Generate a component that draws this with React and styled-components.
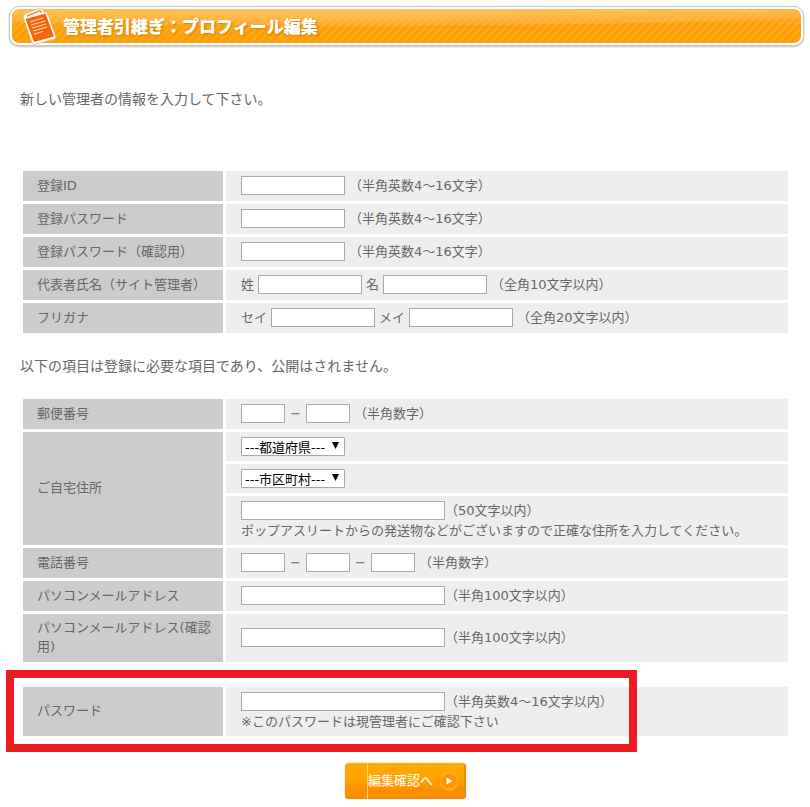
import React from 'react'
import styled, { createGlobalStyle } from 'styled-components'

const GlobalStyle = createGlobalStyle`
  body {
    margin: 0;
    background-color: white;
    color: #666;
    font-family: "DejaVu Sans", "Noto Sans CJK JP", sans-serif;
    font-size: 13px;
    line-height: 19px;
  }
`

const Page = styled.main`
  padding: 6px 6px 8px 9px;
`

const TitleFrame = styled.header`
  border: 1px solid #c8c8c8;
  border-radius: 10px;
  padding: 2px;
  background-color: white;
  box-shadow: 0 1px 2px #bbb;
`

const TitleBar = styled.div`
  position: relative;
  display: flex;
  align-items: center;
  height: 34px;
  padding-left: 51px;
  border-radius: 7px;
  background-color: #fd9f06;
  background-image:
    radial-gradient(ellipse 70% 17px at 42% 0, rgba(255, 255, 255, 0.28), rgba(255, 255, 255, 0.1) 96%, transparent 100%),
    linear-gradient(rgba(255, 255, 255, 0.15), transparent 60%),
    linear-gradient(135deg, transparent 44%, rgba(255, 255, 255, 0.2) 45% 55%, transparent 56%);
  background-size: 100% 100%, 100% 100%, 8px 8px;
`

const Title = styled.h1`
  margin: 0;
  color: white;
  font-family: "Noto Sans CJK JP", sans-serif;
  font-size: 17px;
  font-weight: 900;
  line-height: 24px;
  text-shadow: 1px 1px 2px #c98218;
`

const NoteIcon = styled.svg`
  position: absolute;
  left: 9px;
  top: -4px;
  width: 38px;
  height: 42px;
`

const Form = styled.form`
  padding: 0 13px 0 11px;
`

const Lead = styled.p`
  margin: 0;
  padding: ${props => props.$first ? '43px 0 59px' : '20px 0'};
  font-size: 14px;
  line-height: 20px;
`

const Table = styled.table`
  width: 100%;
  table-layout: fixed;
  border-spacing: 3px;
`

const HeadCell = styled.th`
  width: 178px;
  padding: 4px 8px 6px 14px;
  background-color: #ccc;
  font-weight: normal;
  text-align: left;
`

const Cell = styled.td`
  padding: 5px 15px;
  background-color: #eee;
`

const Line = styled.div`
  display: flex;
  align-items: flex-start;
  gap: ${props => props.$tight ? '0' : '4px'};
  min-height: 20px;
`

const TextBox = styled.input`
  box-sizing: border-box;
  width: ${props => props.$size === 'long' ? '204px' : props.$size === 'short' ? '44px' : '104px'};
  height: 19px;
  padding: 0 2px;
  border: 1px solid #a9a9a9;
  background-color: white;
  font: inherit;
`

const Dash = styled.span`
  width: 13px;
  text-align: center;
`

const SelectWrap = styled.div`
  position: relative;
  width: 104px;
  height: 19px;
`

const Select = styled.select`
  appearance: none;
  box-sizing: border-box;
  display: block;
  width: 100%;
  height: 19px;
  padding: 2px 16px 0 3px;
  border: 1px solid #a9a9a9;
  border-radius: 1px;
  background-color: white;
  color: black;
  font-family: inherit;
  font-size: 13px;
  line-height: 16px;
`

const Arrow = styled.svg`
  position: absolute;
  right: 6px;
  top: 5px;
  width: 7px;
  height: 7px;
  pointer-events: none;
`

const PasswordArea = styled.section`
  position: relative;
  margin-top: 19px;
`

const RedFrame = styled.div`
  position: absolute;
  box-sizing: border-box;
  left: -14px;
  top: -14px;
  bottom: -13px;
  width: 631px;
  border: 8px solid #ed1c24;
  pointer-events: none;
`

const Actions = styled.div`
  display: flex;
  justify-content: center;
  padding-top: 24px;
`

const SubmitButton = styled.button`
  display: flex;
  align-items: center;
  gap: 6px;
  height: 36px;
  padding: 0 7px 0 0;
  border: 0;
  border-radius: 4px;
  background: linear-gradient(#ffab00, #ffa200 50%, #ff8c00 75%, #ff9600);
  box-shadow: inset -2px -2px 1px #f08a10, 0 0 1px #d98a30;
  color: white;
  font-family: inherit;
  font-size: 13px;
`

const ButtonLabel = styled.span`
  display: flex;
  align-items: center;
  box-sizing: border-box;
  height: 36px;
  margin-left: 22px;
  padding-bottom: 3px;
  border-left: 1px solid #ffd27a;
`

const pref = ['---都道府県---']
const city = ['---市区町村---']

const Row = ({ label, id, rowSpan, children }) => (
    <tr>
        <HeadCell scope="row" rowSpan={rowSpan}><label htmlFor={id}>{label}</label></HeadCell>
        <Cell>{children}</Cell>
    </tr>
)

const DropDown = ({ id, name, options }) => (
    <SelectWrap>
        <Select id={id} aria-label={name}>
            {options.map(option => <option key={option}>{option}</option>)}
        </Select>
        <Arrow viewBox="0 0 7 7"><path d="M0 0h7L3.5 7z" fill="black" /></Arrow>
    </SelectWrap>
)

const App = () => {

    const handleSubmit = (e) => {
        e.preventDefault()
    }

    return (
        <Page>
            <GlobalStyle />
            <TitleFrame>
                <TitleBar>
                    <NoteIcon viewBox="0 0 38 42">
                        <path d="M2 12 L4 9 L19 3 L22 4 L23 7 L26 7 L35 32 L34 34 L13 39.5 L11 38 Z" fill="white" stroke="#d9b888" strokeWidth="0.8" strokeLinejoin="round" />
                        <path d="M4.5 14 L24.5 8.5 L33 31.5 L13 37 Z" fill="#f9650c" />
                        <path d="M6 11 L19 5.5 L20.5 7.5" fill="none" stroke="#f98a40" strokeWidth="1.5" />
                        <path d="M9 17l13-4M10 20l14-4M11 23l14-4M12 26l14-4M13 29l9-2.5" stroke="#ffd9b8" strokeWidth="1" />
                    </NoteIcon>
                    <Title>管理者引継ぎ：プロフィール編集</Title>
                </TitleBar>
            </TitleFrame>
            <Form onSubmit={handleSubmit}>
                <Lead $first>新しい管理者の情報を入力して下さい。</Lead>
                <Table>
                    <tbody>
                        <Row label="登録ID" id="loginId">
                            <Line><TextBox id="loginId" />（半角英数4～16文字）</Line>
                        </Row>
                        <Row label="登録パスワード" id="pass">
                            <Line><TextBox id="pass" type="password" />（半角英数4～16文字）</Line>
                        </Row>
                        <Row label="登録パスワード（確認用）" id="passConfirm">
                            <Line><TextBox id="passConfirm" type="password" />（半角英数4～16文字）</Line>
                        </Row>
                        <Row label="代表者氏名（サイト管理者）" id="lastName">
                            <Line>
                                <label htmlFor="lastName">姓</label>
                                <TextBox id="lastName" />
                                <label htmlFor="firstName">名</label>
                                <TextBox id="firstName" />
                                （全角10文字以内）
                            </Line>
                        </Row>
                        <Row label="フリガナ" id="lastKana">
                            <Line>
                                <label htmlFor="lastKana">セイ</label>
                                <TextBox id="lastKana" />
                                <label htmlFor="firstKana">メイ</label>
                                <TextBox id="firstKana" />
                                （全角20文字以内）
                            </Line>
                        </Row>
                    </tbody>
                </Table>
                <Lead>以下の項目は登録に必要な項目であり、公開はされません。</Lead>
                <Table>
                    <tbody>
                        <Row label="郵便番号" id="zip1">
                            <Line>
                                <TextBox id="zip1" $size="short" />
                                <Dash>−</Dash>
                                <TextBox aria-label="郵便番号" $size="short" />
                                （半角数字）
                            </Line>
                        </Row>
                        <Row label="ご自宅住所" id="pref" rowSpan={3}>
                            <DropDown id="pref" name="都道府県" options={pref} />
                        </Row>
                        <tr>
                            <Cell><DropDown id="city" name="市区町村" options={city} /></Cell>
                        </tr>
                        <tr>
                            <Cell>
                                <Line $tight><TextBox aria-label="ご自宅住所" $size="long" />（50文字以内）</Line>
                                ポップアスリートからの発送物などがございますので正確な住所を入力してください。
                            </Cell>
                        </tr>
                        <Row label="電話番号" id="tel1">
                            <Line>
                                <TextBox id="tel1" $size="short" />
                                <Dash>−</Dash>
                                <TextBox aria-label="電話番号" $size="short" />
                                <Dash>−</Dash>
                                <TextBox aria-label="電話番号" $size="short" />
                                （半角数字）
                            </Line>
                        </Row>
                        <Row label="パソコンメールアドレス" id="mail">
                            <Line $tight><TextBox id="mail" $size="long" />（半角100文字以内）</Line>
                        </Row>
                        <Row label="パソコンメールアドレス(確認用)" id="mailConfirm">
                            <Line $tight><TextBox id="mailConfirm" $size="long" />（半角100文字以内）</Line>
                        </Row>
                    </tbody>
                </Table>
                <PasswordArea>
                    <Table>
                        <tbody>
                            <Row label="パスワード" id="adminPass">
                                <Line $tight><TextBox id="adminPass" type="password" $size="long" />（半角英数4～16文字以内）</Line>
                                ※このパスワードは現管理者にご確認下さい
                            </Row>
                        </tbody>
                    </Table>
                    <RedFrame />
                </PasswordArea>
                <Actions>
                    <SubmitButton type="submit">
                        <ButtonLabel>編集確認へ</ButtonLabel>
                        <svg width="20" height="20" viewBox="0 0 20 20">
                            <circle cx="10" cy="10" r="8.5" fill="#ff9500" stroke="#ffae20" strokeWidth="2" />
                            <path d="M7.5 6.5v7l6-3.5z" fill="white" />
                        </svg>
                    </SubmitButton>
                </Actions>
            </Form>
        </Page>
    )
}

export default App
